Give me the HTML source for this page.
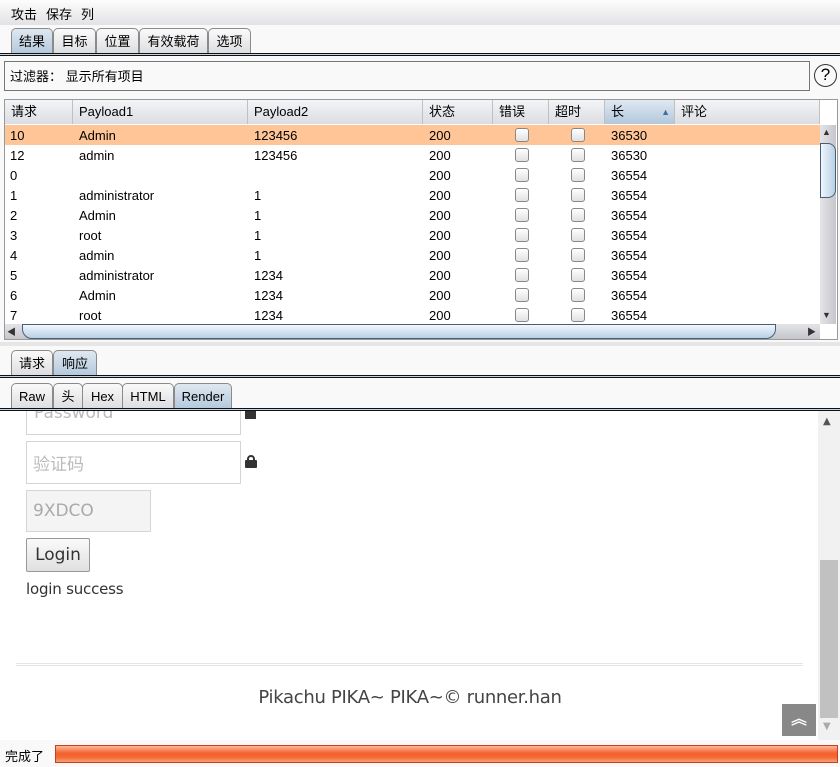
<!DOCTYPE html>
<html><head><meta charset="utf-8"><style>
*{margin:0;padding:0;box-sizing:border-box}
body{width:840px;height:767px;overflow:hidden;background:#f9f9f9;font-family:"Liberation Sans","Noto Sans CJK SC",sans-serif;font-size:13px;color:#000;position:relative}
.a{position:absolute}
.tab{position:absolute;height:26px;border:1px solid #8a8a8a;border-bottom:none;border-radius:5px 5px 0 0;background:linear-gradient(#fafafa,#dcdde1);text-align:center;line-height:25px;font-size:13px}
.tab.on{background:linear-gradient(#dfe8f1,#b3c8dc)}
.line{position:absolute;left:0;width:840px;height:3px;background:#c4d4e4;border-top:1px solid #111;border-bottom:1px solid #111}
.hd{position:absolute;top:100px;height:24px;border-right:1px solid #c0c0c0;background:linear-gradient(#f4f5f7,#dcdde2);line-height:24px;padding-left:6px}
.row{position:absolute;left:5px;width:815px;height:20px;line-height:21px}
.row span{position:absolute;top:0}
.cb{position:absolute;top:3px;width:14px;height:14px;border:1px solid #888;border-radius:3px;background:linear-gradient(#fff,#e1e1e1)}
.m{position:absolute;top:4px}
</style></head><body>
<div class="a" style="left:0;top:0;width:840px;height:25px;background:linear-gradient(#fdfdfd,#e2e2e6)"></div>
<div class="m" style="left:11px">攻击</div><div class="m" style="left:46px">保存</div><div class="m" style="left:81px">列</div>

<div class="tab on" style="left:11px;top:28px;width:42px">结果</div>
<div class="tab" style="left:53px;top:28px;width:43px">目标</div>
<div class="tab" style="left:96px;top:28px;width:43px">位置</div>
<div class="tab" style="left:139px;top:28px;width:69px">有效载荷</div>
<div class="tab" style="left:208px;top:28px;width:43px">选项</div>
<div class="line" style="top:53px"></div>

<div class="a" style="left:4px;top:61px;width:806px;height:30px;border:1px solid #777;background:#f9f9f9;line-height:29px;padding-left:5px">过滤器： 显示所有项目</div>
<div class="a" style="left:814px;top:64px;width:23px;height:23px;border:1.5px solid #333;border-radius:50%;text-align:center;line-height:20px;font-size:17px">?</div>

<div class="a" style="left:4px;top:99px;width:834px;height:241px;border:1px solid #999;background:#fff"></div>
<div class="hd" style="left:5px;width:68px">请求</div>
<div class="hd" style="left:73px;width:175px">Payload1</div>
<div class="hd" style="left:248px;width:175px">Payload2</div>
<div class="hd" style="left:423px;width:70px">状态</div>
<div class="hd" style="left:493px;width:56px">错误</div>
<div class="hd" style="left:549px;width:56px">超时</div>
<div class="hd" style="left:605px;width:70px;background:linear-gradient(#dfe8f1,#b3c8dc)">长<span style="position:absolute;right:4px;top:0;color:#3a6fa8;font-size:9px">▲</span></div>
<div class="hd" style="left:675px;width:145px">评论</div>

<div class="row" style="top:125px;background:#ffc597"><span style="left:5px">10</span><span style="left:74px">Admin</span><span style="left:249px">123456</span><span style="left:424px">200</span><div class="cb" style="left:510px"></div><div class="cb" style="left:566px"></div><span style="left:606px">36530</span></div>
<div class="row" style="top:145px"><span style="left:5px">12</span><span style="left:74px">admin</span><span style="left:249px">123456</span><span style="left:424px">200</span><div class="cb" style="left:510px"></div><div class="cb" style="left:566px"></div><span style="left:606px">36530</span></div>
<div class="row" style="top:165px"><span style="left:5px">0</span><span style="left:424px">200</span><div class="cb" style="left:510px"></div><div class="cb" style="left:566px"></div><span style="left:606px">36554</span></div>
<div class="row" style="top:185px"><span style="left:5px">1</span><span style="left:74px">administrator</span><span style="left:249px">1</span><span style="left:424px">200</span><div class="cb" style="left:510px"></div><div class="cb" style="left:566px"></div><span style="left:606px">36554</span></div>
<div class="row" style="top:205px"><span style="left:5px">2</span><span style="left:74px">Admin</span><span style="left:249px">1</span><span style="left:424px">200</span><div class="cb" style="left:510px"></div><div class="cb" style="left:566px"></div><span style="left:606px">36554</span></div>
<div class="row" style="top:225px"><span style="left:5px">3</span><span style="left:74px">root</span><span style="left:249px">1</span><span style="left:424px">200</span><div class="cb" style="left:510px"></div><div class="cb" style="left:566px"></div><span style="left:606px">36554</span></div>
<div class="row" style="top:245px"><span style="left:5px">4</span><span style="left:74px">admin</span><span style="left:249px">1</span><span style="left:424px">200</span><div class="cb" style="left:510px"></div><div class="cb" style="left:566px"></div><span style="left:606px">36554</span></div>
<div class="row" style="top:265px"><span style="left:5px">5</span><span style="left:74px">administrator</span><span style="left:249px">1234</span><span style="left:424px">200</span><div class="cb" style="left:510px"></div><div class="cb" style="left:566px"></div><span style="left:606px">36554</span></div>
<div class="row" style="top:285px"><span style="left:5px">6</span><span style="left:74px">Admin</span><span style="left:249px">1234</span><span style="left:424px">200</span><div class="cb" style="left:510px"></div><div class="cb" style="left:566px"></div><span style="left:606px">36554</span></div>
<div class="row" style="top:305px"><span style="left:5px">7</span><span style="left:74px">root</span><span style="left:249px">1234</span><span style="left:424px">200</span><div class="cb" style="left:510px"></div><div class="cb" style="left:566px"></div><span style="left:606px">36554</span></div>

<div class="a" style="left:820px;top:125px;width:16px;height:199px;background:linear-gradient(90deg,#e4e4e8,#c5c6cc)"></div>
<div class="a" style="left:822px;top:127px;font-size:9px;color:#333">▲</div>
<div class="a" style="left:822px;top:310px;font-size:9px;color:#333">▼</div>
<div class="a" style="left:820px;top:143px;width:16px;height:55px;border:1px solid #4a5e72;border-radius:0 8px 8px 0;background:linear-gradient(90deg,#f0f6fc,#b8d0e6)"></div>
<div class="a" style="left:5px;top:324px;width:815px;height:15px;background:linear-gradient(#e4e4e8,#c5c6cc)"></div>
<div class="a" style="left:7px;top:325px;font-size:9px;color:#333">◀</div>
<div class="a" style="left:807px;top:325px;font-size:9px;color:#333">▶</div>
<div class="a" style="left:22px;top:324px;width:754px;height:15px;border:1px solid #4a5e72;border-radius:0 0 10px 10px;background:linear-gradient(#f0f6fc,#b8d0e6)"></div>

<div class="a" style="left:0;top:342px;width:840px;height:4px;background:#e6e6e6"></div>

<div class="tab" style="left:11px;top:350px;width:42px">请求</div>
<div class="tab on" style="left:53px;top:350px;width:44px">响应</div>
<div class="line" style="top:375px"></div>

<div class="tab" style="left:11px;top:383px;width:42px">Raw</div>
<div class="tab" style="left:53px;top:383px;width:30px">头</div>
<div class="tab" style="left:82px;top:383px;width:41px">Hex</div>
<div class="tab" style="left:122px;top:383px;width:52px">HTML</div>
<div class="tab on" style="left:174px;top:383px;width:58px">Render</div>
<div class="line" style="top:408px"></div>

<div class="a" style="left:0;top:411px;width:840px;height:329px;background:#fff;overflow:hidden;font-family:'DejaVu Sans','Noto Sans CJK SC',sans-serif">
  <div class="a" style="left:26px;top:-12px;width:215px;height:36px;border:1px solid #d5d5d5;color:#bbb;font-size:17px;padding:3px 7px">Password</div>
  <div class="a" style="left:245px;top:0;width:11px;height:8px;background:#333"></div>
  <div class="a" style="left:26px;top:30px;width:215px;height:43px;border:1px solid #d5d5d5;color:#bbb;font-size:17px;line-height:41px;padding-left:6px;font-family:'Noto Sans CJK SC',sans-serif">验证码</div>
  <div class="a" style="left:245px;top:44px;width:12px;height:13px">
    <div class="a" style="left:2px;top:0;width:8px;height:8px;border:2px solid #333;border-radius:4px 4px 0 0"></div>
    <div class="a" style="left:0;top:5px;width:12px;height:8px;background:#333;border-radius:1px"></div>
  </div>
  <div class="a" style="left:26px;top:79px;width:125px;height:42px;border:1px solid #d5d5d5;background:#f4f4f4;color:#aaa;font-size:17px;line-height:40px;padding-left:6px">9XDCO</div>
  <div class="a" style="left:26px;top:127px;width:64px;height:34px;border:1px solid #999;border-radius:2px;background:linear-gradient(#fafafa,#e0e0e0);font-size:17px;line-height:32px;text-align:center;color:#333">Login</div>
  <div class="a" style="left:26px;top:169px;font-size:15px;color:#333;letter-spacing:-0.2px">login success</div>
  <div class="a" style="left:16px;top:252px;width:787px;height:3px;border-top:1px solid #e5e5e5;border-bottom:1px solid #e5e5e5"></div>
  <div class="a" style="left:0;top:276px;width:820px;text-align:center;font-size:18px;letter-spacing:-0.3px;color:#444">Pikachu PIKA~ PIKA~© runner.han</div>
  <div class="a" style="left:782px;top:293px;width:34px;height:32px;background:#888;color:#fff;text-align:center;font-size:16px;line-height:30px;font-weight:bold">︽</div>
  <div class="a" style="left:818px;top:0;width:22px;height:329px;background:#f1f1f1"></div>
  <div class="a" style="left:820px;top:149px;width:18px;height:158px;background:#c1c1c1"></div>
  <div class="a" style="left:823px;top:5px;font-size:10px;color:#555">▲</div>
  <div class="a" style="left:823px;top:310px;font-size:10px;color:#aaa">▼</div>
</div>

<div class="a" style="left:5px;top:746px;font-size:13px">完成了</div>
<div class="a" style="left:55px;top:745px;width:783px;height:18px;border:1px solid #c8401a;background:linear-gradient(#fbb79a,#f4622e 45%,#f26a33 70%,#fa9f78)"></div>
</body></html>
